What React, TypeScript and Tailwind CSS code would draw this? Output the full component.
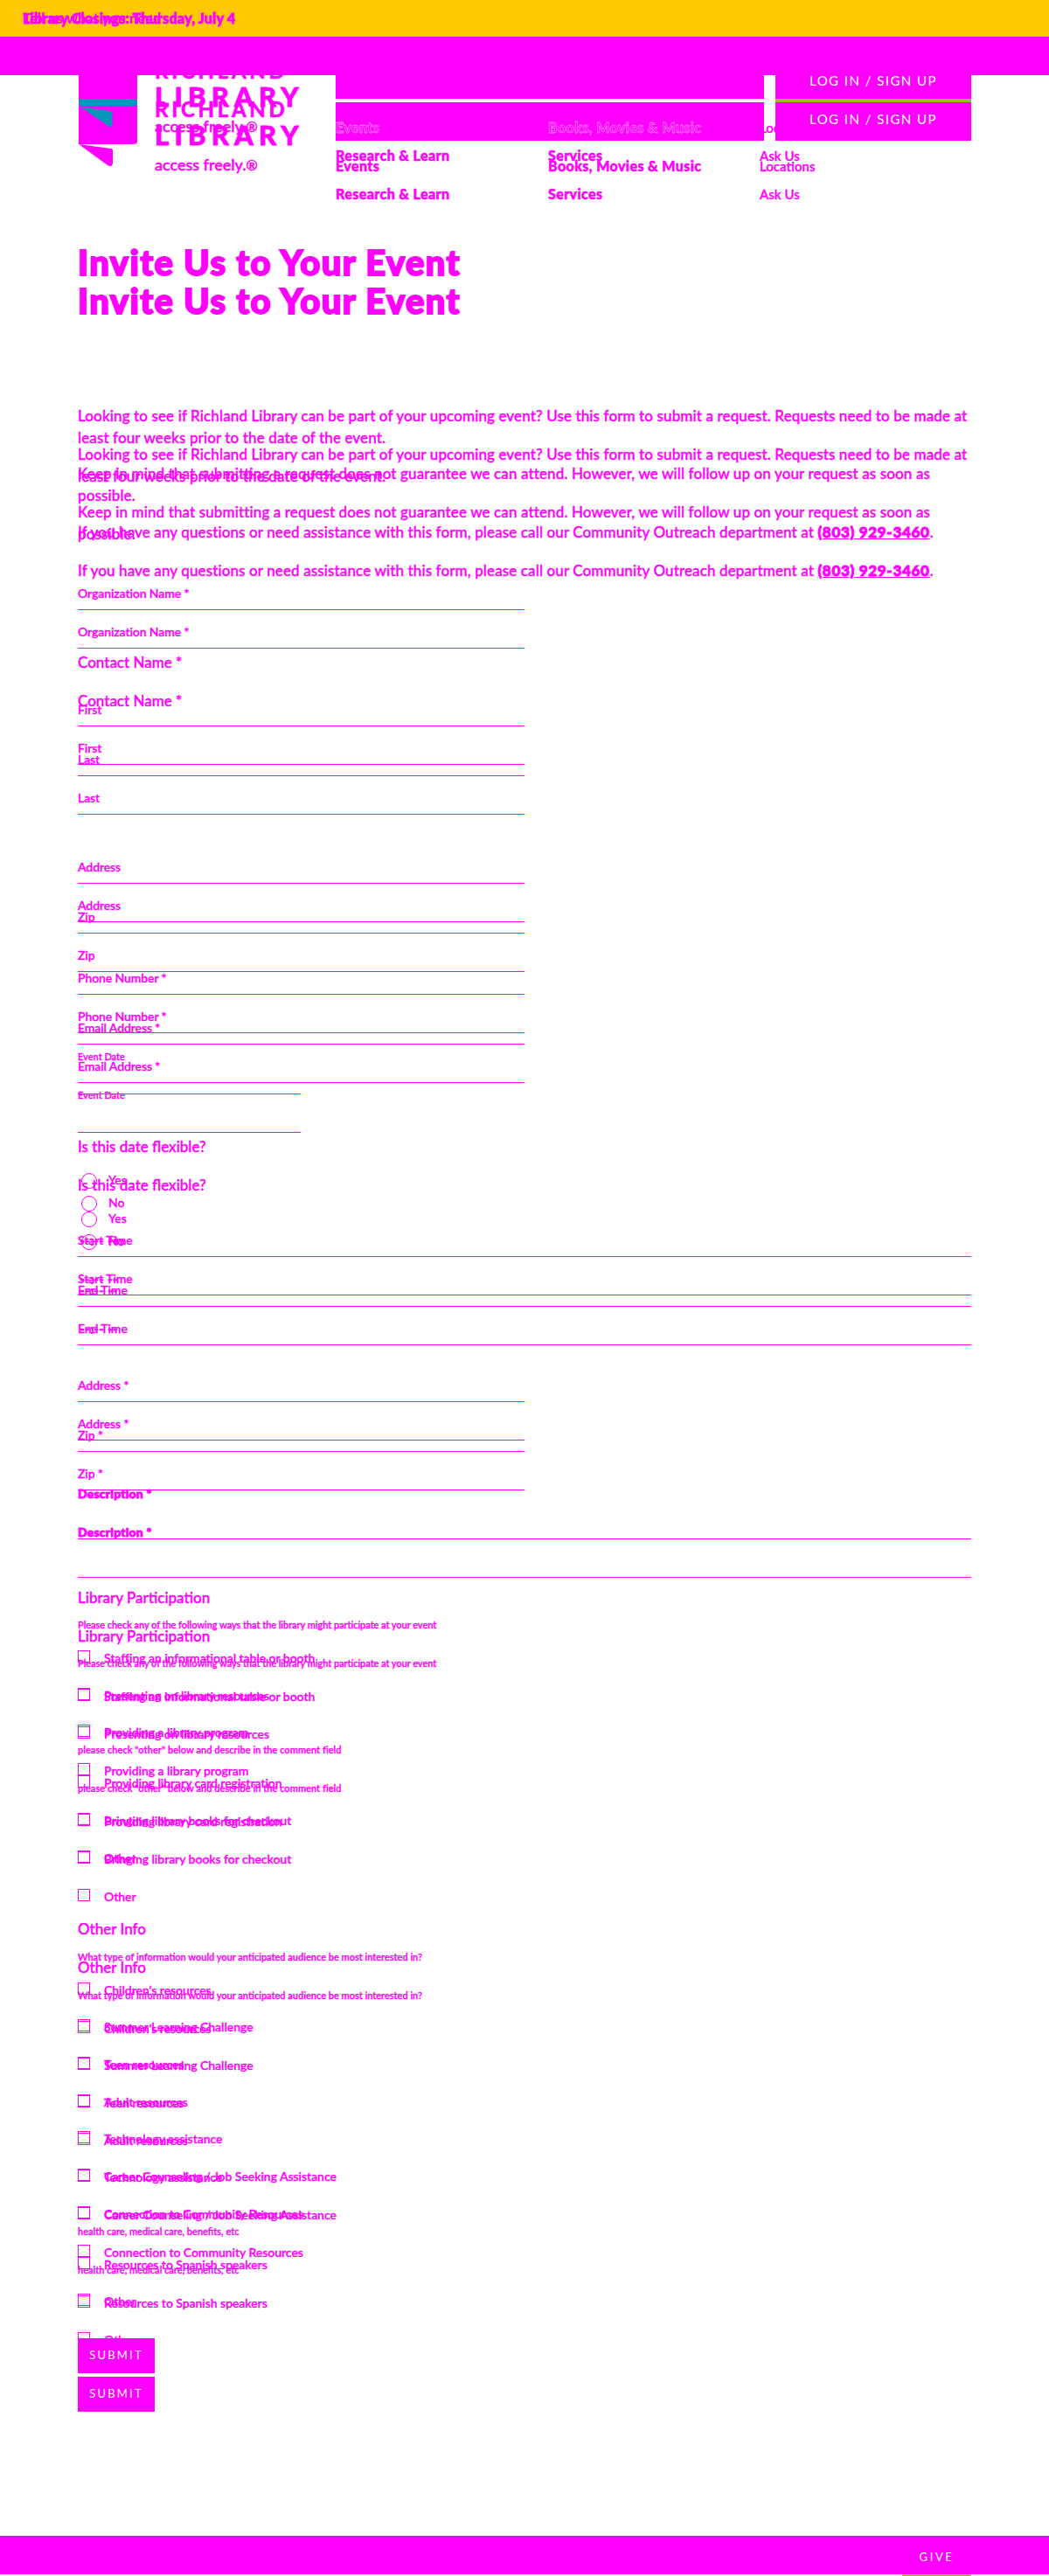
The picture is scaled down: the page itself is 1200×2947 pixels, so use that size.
const M = "text-[#ff00ff]";

type Entry = { label: string; className: string; bold?: boolean; time?: boolean };

function Field({ label, className, bold, time }: Entry) {
  return (
    <div className={`relative border-b border-[#ff00ff] text-[14px] leading-5 ${className}`}>
      <span
        className={
          bold
            ? "relative top-px font-black tracking-[0.2px] [-webkit-text-stroke:0.8px_#f0f]"
            : "font-semibold tracking-[-0.1px]"
        }
      >
        {label}
      </span>
      {time && <span className="absolute left-0.5 top-0 text-base leading-5 font-bold">--:-- --</span>}
    </div>
  );
}

function Heading({ children, className }: { children: string; className: string }) {
  return <h2 className={`text-[17px] leading-6 font-medium whitespace-nowrap [-webkit-text-stroke:0.4px_#f0f] ${className}`}>{children}</h2>;
}

function Note({ children, className }: { children: string; className: string }) {
  return <p className={`text-[11px] leading-4 font-semibold whitespace-nowrap ${className}`}>{children}</p>;
}

function Checks({ items }: { items: string[] }) {
  return (
    <div className="mt-[21px] flex flex-col gap-[28.67px]">
      {items.map((t) => (
        <div key={t} className="flex h-3.5 items-start">
          <span className="mr-4 h-3.5 w-3.5 shrink-0 border border-[#ff00ff]" />
          <span className="text-[14px] leading-[17px] font-semibold tracking-[-0.05px] whitespace-nowrap">{t}</span>
        </div>
      ))}
    </div>
  );
}

function Radio({ label, className }: { label: string; className: string }) {
  return (
    <div className={`flex h-[18px] ${className}`}>
      <span className="mr-[13px] ml-1 h-[18px] w-[18px] rounded-full border border-[#ff00ff]" />
      <span className="text-[14px] leading-4 font-semibold">{label}</span>
    </div>
  );
}

function Form() {
  return (
    <div className="w-[1022px] [-webkit-text-stroke:0.3px_#f0f]">
      <h1 className="pt-4 text-[40px] leading-12 font-black tracking-[1.35px] whitespace-nowrap [-webkit-text-stroke:1.8px_#f0f]">
        Invite Us to Your Event
      </h1>
      <div className="mt-[139px] text-[17px] leading-[25px] font-medium tracking-[0.12px] whitespace-nowrap [-webkit-text-stroke:0.4px_#f0f]">
        <p>
          Looking to see if Richland Library can be part of your upcoming event? Use this form to submit a request. Requests need to be made at
          <br />
          least four weeks prior to the date of the event.
        </p>
        <p className="mt-4">
          Keep in mind that submitting a request does not guarantee we can attend. However, we will follow up on your request as soon as
          <br />
          possible.
        </p>
        <p className="mt-[17px]">
          If you have any questions or need assistance with this form, please call our Community Outreach department at{" "}
          <a className="font-black tracking-[0.7px] underline [-webkit-text-stroke:0.9px_#f0f]">(803) 929-3460</a>.
        </p>
      </div>
      <Field label="Organization Name *" className="mt-12 h-[29px] w-[511px]" />
      <Heading className="mt-12">Contact Name *</Heading>
      <Field label="First" className="mt-8 h-[29px] w-[511px]" />
      <Field label="Last" className="mt-7 h-[29px] w-[511px]" />
      <Field label="Address" className="mt-[94px] h-[29px] w-[511px]" />
      <Field label="Zip" className="mt-7 h-[29px] w-[511px]" />
      <Field label="Phone Number *" className="mt-[41px] h-[29px] w-[511px]" />
      <Field label="Email Address *" className="mt-7 h-[29px] w-[511px]" />
      <div className="mt-1.5 h-[51px] w-[255px] border-b border-[#ff00ff]">
        <Note className="">Event Date</Note>
      </div>
      <Heading className="mt-12">Is this date flexible?</Heading>
      <Radio label="Yes" className="mt-[18px]" />
      <Radio label="No" className="mt-2" />
      <Field label="Start Time" time className="mt-[23px] h-[29px]" />
      <Field label="End Time" time className="mt-7 h-[29px]" />
      <Field label="Address *" className="mt-20 h-[29px] w-[511px]" />
      <Field label="Zip *" className="mt-7 h-[29px] w-[511px]" />
      <Field label="Description *" bold className="mt-[37px] h-[63px]" />
      <Heading className="mt-[55px]">Library Participation</Heading>
      <Note className="mt-[11px] tracking-[-0.05px]">Please check any of the following ways that the library might participate at your event</Note>
      <Checks items={["Staffing an informational table or booth", "Presenting on library resources", "Providing a library program"]} />
      <Note className="mt-[7px] tracking-[0.05px]">please check "other" below and describe in the comment field</Note>
      <Checks items={["Providing library card registration", "Bringing library books for checkout", "Other"]} />
      <Heading className="mt-16">Other Info</Heading>
      <Note className="mt-3">What type of information would your anticipated audience be most interested in?</Note>
      <Checks
        items={[
          "Children's resources",
          "Summer Learning Challenge",
          "Teen resources",
          "Adult resources",
          "Technology assistance",
          "Career Counseling / Job Seeking Assistance",
          "Connection to Community Resources",
        ]}
      />
      <Note className="mt-[7px]">health care, medical care, benefits, etc</Note>
      <Checks items={["Resources to Spanish speakers", "Other"]} />
      <button className="relative z-10 mt-[37px] block h-10 w-[88px] bg-[#ff00ff] text-[13px] tracking-[2.2px] text-white [-webkit-text-stroke:0]">
        SUBMIT
      </button>
    </div>
  );
}

function Brand() {
  return (
    <div className="w-[207px] whitespace-nowrap">
      <div className="text-[24px] leading-[23px] font-bold tracking-[3.7px] [-webkit-text-stroke:0.6px_#f0f]">RICHLAND</div>
      <div className="mt-0.5 text-[31px] leading-8 font-black tracking-[6.2px] [-webkit-text-stroke:0.8px_#f0f]">LIBRARY</div>
      <div className="mt-2 text-[18px] leading-5 font-medium [-webkit-text-stroke:0.5px_#f0f]">
        access freely.<span className="text-[16px]">®</span>
      </div>
    </div>
  );
}

function Nav({ first }: { first: string }) {
  return (
    <div className="flex text-base leading-4 whitespace-nowrap">
      <div className="w-[243px] font-black tracking-[0.4px]">
        <div className={first}>Events</div>
        <div className="mt-4 [-webkit-text-stroke:0.5px_#f0f]">Research &amp; Learn</div>
      </div>
      <div className="w-[242px] font-black tracking-[0.4px]">
        <div className={first}>Books, Movies &amp; Music</div>
        <div className="mt-4 [-webkit-text-stroke:0.5px_#f0f]">Services</div>
      </div>
      <div className="text-[15px] font-semibold [-webkit-text-stroke:0.3px_#f0f]">
        <div>Locations</div>
        <div className="mt-4">Ask Us</div>
      </div>
    </div>
  );
}

export default function App() {
  return (
    <div className={`h-[2947px] w-[1200px] overflow-hidden bg-white font-['Lato',sans-serif] ${M}`}>
      <div className="relative h-[42px] bg-[#ffc800] pl-[26px] text-[16px] leading-[42px] font-black tracking-[0.25px] [-webkit-text-stroke:0.8px_#f0f]">
        Library Closings: Thursday, July 4
        <span className="absolute top-0 left-[26px] [-webkit-text-stroke:0]">Tell us what you need</span>
      </div>
      <div className="relative z-10 h-11 bg-[#ff00ff]" />
      <header className="flex h-[174px] pl-[90px]">
        <svg className="w-[87px] shrink-0" height="106" viewBox="0 0 87 106">
          <path d="M0 0H67V76Q67 79 63 79H0Z" fill="#f0f" />
          <path d="M0 30Q0 27 3 27H64Q67 27 67 31Q67 35 63 35H3Q0 35 0 32Z" fill="#0795b9" />
          <path d="M1 36L37 41Q38.500 41 38.500 43V56Q38.500 61 34 58Z" fill="#0795b9" />
          <path d="M0 79L37 84Q39 84 39 86V101Q38 106 33 103Z" fill="#f0f" />
        </svg>
        <div className="relative -mt-[17px] w-[207px]">
          <Brand />
          <div className="absolute top-11 left-0">
            <Brand />
          </div>
        </div>
        <div className="w-[727px]">
          <div className="relative z-10 flex gap-[13px] text-center text-[15px] tracking-[1.45px] text-white">
            <div className="w-[490px]">
              <div className="h-[27px] bg-[#ff00ff]" />
              <div className="h-1 bg-[#f0f1f5]" />
              <div className="h-11 bg-[#ff00ff]" />
            </div>
            <div className="w-[224px]">
              <div className="h-[27px] bg-[#ff00ff] leading-[13px]">LOG IN / SIGN UP</div>
              <div className="h-1 bg-[#93c11c]" />
              <div className="h-11 bg-[#ff00ff] leading-[38px]">LOG IN / SIGN UP</div>
            </div>
          </div>
          <div className="relative -mt-[23px]">
            <Nav first="relative z-20 [-webkit-text-stroke:0.3px_white]" />
            <div className="absolute top-11 left-0">
              <Nav first="[-webkit-text-stroke:0.5px_#f0f]" />
            </div>
          </div>
        </div>
      </header>
      <main className="relative h-[2641px] pl-[89px]">
        <Form />
        <div className="absolute top-11 left-[89px]" aria-hidden="true">
          <Form />
        </div>
      </main>
      <footer className="h-[46px] bg-[#f0f1f5]">
        <div className="flex h-11 bg-[#ff00ff] pl-[1032px] text-[13px] text-white">
          <div className="w-[79px] pt-1 text-center leading-10 tracking-[2.6px]">GIVE</div>
        </div>
        <div className="ml-[1032px] h-0.5 w-[79px] bg-[#93c11c]" />
      </footer>
    </div>
  );
}
